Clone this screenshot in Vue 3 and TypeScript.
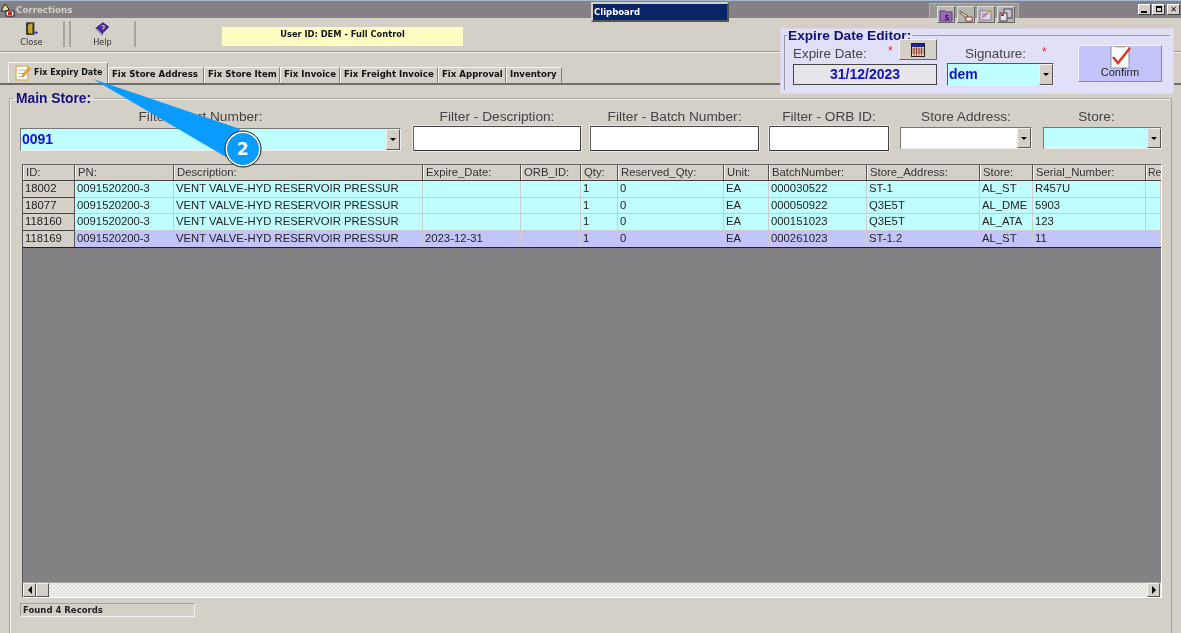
<script setup lang="ts">
interface Col { key: string; label: string; width: number }
interface Tab { label: string; width: number }
const cols: Col[] = [
  { key: 'id', label: 'ID:', width: 52 },
  { key: 'pn', label: 'PN:', width: 99 },
  { key: 'desc', label: 'Description:', width: 249 },
  { key: 'exp', label: 'Expire_Date:', width: 98 },
  { key: 'orb', label: 'ORB_ID:', width: 60 },
  { key: 'qty', label: 'Qty:', width: 37 },
  { key: 'res', label: 'Reserved_Qty:', width: 106 },
  { key: 'unit', label: 'Unit:', width: 45 },
  { key: 'batch', label: 'BatchNumber:', width: 98 },
  { key: 'addr', label: 'Store_Address:', width: 113 },
  { key: 'store', label: 'Store:', width: 53 },
  { key: 'serial', label: 'Serial_Number:', width: 113 },
  { key: 're', label: 'Re', width: 15 },
]
const gridTemplate = cols.map((c) => c.width + 'px').join(' ')
const desc = 'VENT VALVE-HYD RESERVOIR PRESSUR'
const rows: Record<string, string>[] = [
  { id: '18002', pn: '0091520200-3', desc, exp: '', orb: '', qty: '1', res: '0', unit: 'EA', batch: '000030522', addr: 'ST-1', store: 'AL_ST', serial: 'R457U', re: '' },
  { id: '18077', pn: '0091520200-3', desc, exp: '', orb: '', qty: '1', res: '0', unit: 'EA', batch: '000050922', addr: 'Q3E5T', store: 'AL_DME', serial: '5903', re: '' },
  { id: '118160', pn: '0091520200-3', desc, exp: '', orb: '', qty: '1', res: '0', unit: 'EA', batch: '000151023', addr: 'Q3E5T', store: 'AL_ATA', serial: '123', re: '' },
  { id: '118169', pn: '0091520200-3', desc, exp: '2023-12-31', orb: '', qty: '1', res: '0', unit: 'EA', batch: '000261023', addr: 'ST-1.2', store: 'AL_ST', serial: '11', re: '' },
]
const tabs: Tab[] = [
  { label: 'Fix Store Address', width: 96 },
  { label: 'Fix Store Item', width: 76 },
  { label: 'Fix Invoice', width: 60 },
  { label: 'Fix Freight Invoice', width: 98 },
  { label: 'Fix Approval', width: 68 },
  { label: 'Inventory', width: 56 },
]
</script>

<template>
  <div class="app">
    <header class="titlebar">
      <svg class="ti" width="16" height="14" viewBox="0 0 16 14">
        <path d="M1 8 L5 1 L9 6 L7 8Z" fill="#e8d890" stroke="#222" stroke-width="1" />
        <rect x="6" y="8" width="8" height="5" fill="#fff" stroke="#222" />
        <rect x="8" y="9" width="4" height="3" fill="#c22" />
      </svg>
      <span class="title-text">Corrections</span>
      <span class="win-btns">
        <button class="win-btn"><i class="w-min"></i></button>
        <button class="win-btn"><i class="w-max"></i></button>
        <button class="win-btn x">✕</button>
      </span>
    </header>

    <section class="toolbar">
      <div class="tool close">
        <svg width="19" height="18" viewBox="0 0 18 17">
          <path d="M3 1h9v14H3z" fill="#3a3a2a" stroke="#222" />
          <path d="M4.500 3l6-2v14l-6-1.500z" fill="#c8a820" stroke="#333" stroke-width=".6" />
          <path d="M11 13h5m-2-2l2 2-2 2" fill="none" stroke="#1a2fc0" stroke-width="1.200" />
        </svg>
        <span>Close</span>
      </div>
      <div class="sep"></div>
      <div class="tool help">
        <svg width="19" height="18" viewBox="0 0 17 17">
          <path d="M1 7 L9 1 L16 6 L8 14Z" fill="#4a22c0" stroke="#1a0a60" />
          <path d="M1 7 L8 14 L8 16 L1 9Z" fill="#d8d8e8" stroke="#1a0a60" stroke-width=".6" />
          <path d="M7 4.500h3.500v2.500l-1.500 1v1" fill="none" stroke="#f4d820" stroke-width="1.400" />
        </svg>
        <span>Help</span>
      </div>
      <div class="sep single"></div>
      <div class="user-banner">User ID: DEM - Full Control</div>
    </section>

    <nav class="tabs">
      <div class="tab active">
        <svg width="16" height="16" viewBox="0 0 15 15">
          <rect x="1" y="1" width="11" height="13" fill="#fff" stroke="#d8a850" />
          <path d="M3 5h7M3 8h6M3 11h5" stroke="#b8b8b8" />
          <path d="M7 9l6-7 1.500 1.500-6 7-2 .5z" fill="#f0b030" stroke="#a87010" stroke-width=".5" />
        </svg>
        <span>Fix Expiry Date</span>
      </div>
      <div v-for="t in tabs" :key="t.label" class="tab" :style="{ width: t.width + 'px' }">{{ t.label }}</div>
    </nav>

    <fieldset class="main-store">
      <legend>Main Store:</legend>
      <div class="filters">
        <label class="filter f-part">
          <span>Filter - Part Number:</span>
          <div class="combo cyan"><span class="combo-val">0091</span><i class="arrow"><b></b></i></div>
        </label>
        <label class="filter f-desc">
          <span>Filter - Description:</span>
          <div class="text-in"></div>
        </label>
        <label class="filter f-batch">
          <span>Filter - Batch Number:</span>
          <div class="text-in"></div>
        </label>
        <label class="filter f-orb">
          <span>Filter - ORB ID:</span>
          <div class="text-in"></div>
        </label>
        <label class="filter f-addr">
          <span>Store Address:</span>
          <div class="combo small"><span class="combo-val"></span><i class="arrow"><b></b></i></div>
        </label>
        <label class="filter f-store">
          <span>Store:</span>
          <div class="combo small cyan"><span class="combo-val"></span><i class="arrow"><b></b></i></div>
        </label>
      </div>

      <div class="grid-frame">
        <div class="grid-row head" :style="{ gridTemplateColumns: gridTemplate }">
          <div v-for="c in cols" :key="c.key" class="hcell">{{ c.label }}</div>
        </div>
        <div
          v-for="(r, i) in rows"
          :key="r.id"
          class="grid-row body"
          :class="{ selected: i === rows.length - 1 }"
          :style="{ gridTemplateColumns: gridTemplate }"
        >
          <div v-for="c in cols" :key="c.key" class="cell" :class="{ idcell: c.key === 'id' }">{{ r[c.key] }}</div>
        </div>
        <div class="grid-empty"></div>
        <div class="hscroll">
          <i class="sb-btn"><b class="left"></b></i>
          <i class="sb-thumb"></i>
          <span class="sb-track"></span>
          <i class="sb-btn"><b class="right"></b></i>
        </div>
      </div>
      <div class="status">Found 4 Records</div>
    </fieldset>

    <div class="clipboard">Clipboard</div>

    <div class="tool-strip">
      <i class="ts-btn">
        <svg width="14" height="14" viewBox="0 0 14 14"><path d="M1 3h5l1 1h6v9H1z" fill="#9a6ab8" stroke="#5a3a78" /><text x="8" y="12" class="ts-s">S</text></svg>
      </i>
      <i class="ts-btn">
        <svg width="14" height="14" viewBox="0 0 14 14"><path d="M1 3l8 5-2 2-6-5z" fill="#e8d890" stroke="#333" stroke-width=".7" /><rect x="7" y="9" width="6" height="4" fill="#fff" stroke="#a33" /></svg>
      </i>
      <i class="ts-btn">
        <svg width="14" height="14" viewBox="0 0 14 14"><rect x="1" y="3" width="11" height="9" fill="#ddd8e8" stroke="#8a7aa8" /><path d="M3 10l9-8" stroke="#c8a020" stroke-width="1.400" /><path d="M3 6h6M3 8h4" stroke="#a060b0" /></svg>
      </i>
      <i class="ts-btn">
        <svg width="14" height="14" viewBox="0 0 14 14"><rect x="5" y="1" width="8" height="9" fill="#c8c4d0" stroke="#444" /><rect x="1" y="5" width="7" height="8" fill="#e8e0e8" stroke="#444" /><path d="M2 7h3" stroke="#c02060" stroke-width="2" /></svg>
      </i>
    </div>

    <div class="editor">
      <fieldset class="editor-box">
        <legend>Expire Date Editor:</legend>
        <div class="ed-col ed-date">
          <div class="ed-top">
            <span class="ed-lab">Expire Date:</span>
            <span class="star">*</span>
            <button class="cal">
              <svg width="14" height="14" viewBox="0 0 14 14">
                <rect x="0.500" y="0.500" width="13" height="13" fill="#f4ecc8" stroke="#222" />
                <rect x="1" y="1" width="12" height="3" fill="#1a2a90" />
                <path d="M1 6h12M1 8h12M1 10h12M3 4v9M5.500 4v9M8 4v9M10.500 4v9" stroke="#903030" stroke-width=".8" />
              </svg>
            </button>
          </div>
          <div class="date-box">31/12/2023</div>
        </div>
        <div class="ed-col ed-sig">
          <div class="ed-top sig-top">
            <span class="ed-lab">Signature:</span>
            <span class="star">*</span>
          </div>
          <div class="combo sig cyan"><span class="combo-val">dem</span><i class="arrow"><b></b></i></div>
        </div>
        <button class="confirm">
          <svg width="24" height="26" viewBox="0 0 24 26">
            <rect x="2" y="3" width="18" height="22" fill="#fff" stroke="#7a90b8" />
            <rect x="7" y="0" width="9" height="4" fill="#d8c890" stroke="#777" stroke-width=".6" />
            <path d="M4 14l5 6L21 5" fill="none" stroke="#e03020" stroke-width="2.400" />
          </svg>
          <span>Confirm</span>
        </button>
      </fieldset>
    </div>

    <svg class="callout" width="270" height="100" viewBox="0 0 270 100">
      <path d="M93 0 L240 50 L226 78Z" fill="#0a9bff" />
      <circle cx="243" cy="70" r="17" fill="#0a9bff" stroke="#fff" stroke-width="2" />
      <circle cx="243" cy="70" r="18" fill="none" stroke="#111" stroke-width="1" />
      <text x="243" y="76" class="callout-num">2</text>
    </svg>
  </div>
</template>

<style>
html, body { margin: 0; padding: 0; background: #d4d0c8; overflow: hidden; }
</style>

<style scoped>
.app {
  position: relative;
  width: 1181px;
  height: 633px;
  overflow: hidden;
  background: #d4d0c8;
  font-family: "Liberation Sans", Arial, sans-serif;
  color: #222;
  display: flex;
  flex-direction: column;
  filter: blur(0.3px);
}
.titlebar {
  height: 17px;
  flex: none;
  background: #848284;
  border-top: 1px solid #a8b8d0;
  display: flex;
  align-items: center;
}
.ti { flex: none; }
.title-text {
  font: bold 8.700px "DejaVu Sans", sans-serif;
  color: #d4d0c8;
}
.win-btns { margin-left: auto; display: flex; gap: 1px; padding-right: 1px; }
.win-btn {
  width: 13px;
  height: 11px;
  padding: 0;
  background: #d4d0c8;
  border: 1px solid;
  border-color: #fff #404040 #404040 #fff;
  font: bold 8px "DejaVu Sans", sans-serif;
  line-height: 8px;
  color: #000;
  position: relative;
}
.win-btn.x { margin-left: 1px; }
.w-min { position: absolute; left: 2px; bottom: 1px; width: 6px; height: 2px; background: #000; }
.w-max { position: absolute; left: 3px; top: 1px; width: 6px; height: 6px; border: 1px solid #000; border-top-width: 2px; box-sizing: border-box; }

.toolbar {
  height: 34px;
  flex: none;
  box-sizing: border-box;
  border-bottom: 1px solid #9a9890;
  box-shadow: 0 1px 0 #eee;
  display: flex;
  align-items: stretch;
  padding: 3px 0 4px;
}
.tool {
  display: flex;
  flex-direction: column;
  align-items: center;
  font: 8.200px "DejaVu Sans", sans-serif;
  color: #333;
  gap: 1px;
  padding-top: 1px;
}
.tool.close { width: 63px; }
.tool.help { width: 63px; }
.sep {
  width: 8px;
  flex: none;
  border-left: 2px solid #a8a6a0;
  border-right: 2px solid #a8a6a0;
  box-sizing: border-box;
}
.sep.single { width: 2px; border-right: none; }
.user-banner {
  margin: 6px 0 0 86px;
  width: 241px;
  height: 19px;
  background: #ffffc4;
  font: bold 8.300px "DejaVu Sans", sans-serif;
  text-align: center;
  color: #111;
  line-height: 14px;
}

.tabs {
  flex: none;
  height: 33px;
  box-sizing: border-box;
  padding: 11px 0 0 8px;
  display: flex;
  align-items: flex-end;
  border-bottom: 2px solid #6e6c68;
}
.tab {
  height: 16px;
  flex: none;
  box-sizing: border-box;
  padding: 0 0 0 3px;
  background: #d4d0c8;
  border: 1px solid;
  border-color: #f4f4f0 #808080 transparent #f4f4f0;
  font: bold 8.600px "DejaVu Sans", sans-serif;
  line-height: 13px;
  color: #111;
  white-space: nowrap;
}
.tab.active {
  height: 21px;
  width: 100px;
  display: flex;
  align-items: center;
  gap: 3px;
  padding: 0 0 0 6px;
  font-size: 8px;
}

.main-store {
  flex: none;
  margin: 7px 0 0 9px;
  width: 1163px;
  height: 566px;
  box-sizing: border-box;
  padding: 0 0 0 10px;
  border: 1px solid #a8a6a0;
  border-bottom: none;
  box-shadow: inset 1px 1px 0 #eee;
}
.main-store legend {
  font: bold 13.800px "Liberation Sans", sans-serif;
  color: #10107c;
  padding: 0 3px;
  margin-left: -7px;
  line-height: 13px;
}
.filters {
  display: flex;
  margin-top: 4px;
  height: 39px;
  align-items: flex-start;
}
.filter {
  display: flex;
  flex-direction: column;
  align-items: stretch;
  text-align: center;
  font-size: 13.700px;
  color: #444;
  flex: none;
  line-height: 15px;
  white-space: nowrap;
}
.f-part { width: 381px; margin-right: 12px; }
.f-part > span { padding-right: 20px; }
.f-desc { width: 168px; margin-right: 9px; }
.f-batch { width: 169px; margin-right: 10px; }
.f-orb { width: 120px; margin-right: 11px; }
.f-addr { width: 132px; margin-right: 11px; }
.f-store { width: 119px; }
.f-store > span { padding-right: 12px; }
.text-in {
  height: 25px;
  margin-top: 2px;
  box-sizing: border-box;
  background: #fff;
  border: 1px solid #444;
  border-bottom-color: #333;
  border-left-color: #666;
  box-shadow: 0 0 0 1px #e8e6e0;
}
.combo {
  display: flex;
  box-sizing: border-box;
  margin-top: 4px;
  height: 23px;
  background: #fff;
  border: 1px solid;
  border-color: #777 #eee #eee #777;
}
.combo.small { height: 22px; margin-top: 3px; }
.combo.cyan { background: #c0ffff; }
.combo-val {
  flex: 1;
  font: bold 14px "Liberation Sans", sans-serif;
  color: #1010d8;
  text-align: left;
  padding-left: 1px;
  line-height: 20px;
}
.arrow {
  width: 14px;
  flex: none;
  background: #d4d0c8;
  border: 1px solid;
  border-color: #eee #555 #555 #eee;
  box-sizing: border-box;
  display: flex;
  align-items: center;
  justify-content: center;
}
.arrow b {
  width: 0;
  height: 0;
  border: 3px solid transparent;
  border-top: 3px solid #000;
  border-bottom: 0;
}

.grid-frame {
  margin-top: 16px;
  margin-left: 2px;
  width: 1138px;
  height: 432px;
  box-sizing: content-box;
  display: flex;
  flex-direction: column;
  background: #848284;
  border-left: 1px solid #555;
  border-top: 1px solid #666;
  border-right: 1px solid #fff;
  border-bottom: 1px solid #fff;
  overflow: hidden;
}
.grid-row { display: grid; flex: none; }
.grid-row.head { height: 15px; background: #d4d0c8; border-bottom: 1px solid #444; box-sizing: content-box; }
.hcell {
  font-size: 11.300px;
  line-height: 15px;
  padding-left: 2px;
  color: #333;
  border-right: 1px solid #555;
  border-left: 1px solid #f4f4f0;
  white-space: nowrap;
  overflow: hidden;
}
.hcell:last-child { padding-left: 1px; border-right: none; font-size: 10.500px; }
.grid-row.body { height: 16.500px; background: #c0ffff; }
.grid-row.selected { background: #c4c4fc; border-bottom: 1px solid #222; }
.cell {
  font-size: 11.300px;
  line-height: 15.500px;
  padding-left: 2px;
  color: #222;
  border-right: 1px solid #ccc;
  border-bottom: 1px solid #ccc;
  white-space: nowrap;
  overflow: hidden;
}
.selected .cell { border-bottom: none; }
.idcell {
  background: #d4d0c8;
  border-top: 1px solid #444;
  border-right: 1px solid #555;
  border-bottom: none;
  margin-top: -1px;
}
.grid-empty { flex: 1; }
.hscroll {
  flex: none;
  height: 14px;
  display: flex;
  padding-right: 1px;
  background: repeating-conic-gradient(#e2e0da 0 25%, #f2f0ec 0 50%) 0 0 / 4px 4px;
  border-top: 1px solid #a8a6a0;
}
.sb-btn, .sb-thumb {
  width: 13px;
  flex: none;
  box-sizing: border-box;
  background: #d4d0c8;
  border: 1px solid;
  border-color: #f4f4f0 #555 #555 #f4f4f0;
  display: flex;
  align-items: center;
  justify-content: center;
}
.sb-track { flex: 1; }
.sb-btn b { width: 0; height: 0; border: 4px solid transparent; }
.sb-btn b.left { border-right-color: #000; border-left: 0; }
.sb-btn b.right { border-left-color: #000; border-right: 0; }
.status {
  margin: 5px 0 0 0;
  width: 175px;
  height: 14px;
  box-sizing: border-box;
  border: 1px solid;
  border-color: #a0a09a #eee #eee #a0a09a;
  font: bold 8.500px "DejaVu Sans", sans-serif;
  line-height: 12px;
  padding-left: 2px;
  color: #222;
}

.clipboard {
  position: absolute;
  left: 591px;
  top: 2px;
  width: 138px;
  height: 20px;
  box-sizing: border-box;
  background: #0a246a;
  border: 2px solid;
  border-color: #d4d0c8 #555 #555 #d4d0c8;
  font: bold 8.500px "DejaVu Sans", sans-serif;
  line-height: 17px;
  color: #fff;
  padding-left: 1px;
}
.tool-strip {
  position: absolute;
  left: 929px;
  top: 3px;
  width: 90px;
  height: 22px;
  box-sizing: border-box;
  padding: 2px 0 0 7px;
  display: flex;
  gap: 2px;
  background: rgba(212, 208, 200, 0.28);
  border: 1px solid rgba(200, 198, 190, 0.5);
}
.ts-btn {
  width: 18px;
  height: 17px;
  box-sizing: border-box;
  background: #b8b4b0;
  border: 1px solid;
  border-color: #ddd #666 #666 #ddd;
  display: flex;
  align-items: center;
  justify-content: center;
}
.ts-s { font: bold 7px "DejaVu Sans", sans-serif; fill: #1a1a60; text-anchor: middle; }

.editor {
  position: absolute;
  left: 780px;
  top: 28px;
  width: 394px;
  height: 66px;
  box-sizing: border-box;
  background: #e0e0f8;
  padding: 0 3px 3px;
  border: 1px solid #d8d8e8;
}
.editor-box {
  margin: 0;
  height: 100%;
  box-sizing: border-box;
  padding: 0 0 0 8px;
  display: flex;
  align-items: flex-start;
  border: 1px solid #9a9aa8;
  border-width: 1px 0 0 1px;
  border-bottom: none;
}
.editor-box legend {
  font: bold 13.700px "Liberation Sans", sans-serif;
  color: #10107c;
  padding: 0 1px;
  margin-left: -6px;
  line-height: 13px;
}
.ed-col { flex: none; margin-top: -3px; }
.ed-date { width: 144px; margin-right: 10px; }
.ed-date .ed-lab { padding-top: 6px; }
.ed-sig { width: 107px; margin-right: 24px; }
.ed-top { height: 22px; display: flex; align-items: center; position: relative; }
.ed-lab { font-size: 13.400px; color: #444; padding-top: 4px; }
.star { color: #f02020; font-size: 12px; position: absolute; left: 95px; top: 5px; }
.sig-top { padding-left: 18px; margin-top: 1px; }
.sig-top .star { left: 95px; }
.cal {
  position: absolute;
  right: 0;
  top: 0;
  width: 38px;
  height: 21px;
  padding: 0;
  background: #d4d0c8;
  border: 1px solid;
  border-color: #f4f4f0 #666 #666 #f4f4f0;
  display: flex;
  align-items: center;
  justify-content: center;
}
.date-box {
  margin-top: 3px;
  height: 21px;
  box-sizing: border-box;
  border: 1px solid #444;
  background: #e8e4ec;
  font: bold 14px "Liberation Sans", sans-serif;
  line-height: 18px;
  text-align: center;
  color: #1010d0;
}
.combo.sig { margin-top: 1px; height: 23px; border-color: #555 #eee #eee #555; }
.confirm {
  width: 84px;
  height: 37px;
  margin-top: 3px;
  padding: 0;
  background: #c4c4fc;
  border: 1px solid;
  border-color: #f4f4ff #8888a0 #8888a0 #f4f4ff;
  position: relative;
  font: 11px "Liberation Sans", sans-serif;
  color: #222;
  display: flex;
  flex-direction: column;
  align-items: center;
  overflow: hidden;
}
.confirm svg { position: absolute; top: -3px; left: 30px; }
.confirm span { position: relative; margin-top: 20px; }

.callout { position: absolute; left: 0; top: 79px; }
.callout-num { font: bold 17px "DejaVu Sans", sans-serif; fill: #fff; text-anchor: middle; }
</style>
